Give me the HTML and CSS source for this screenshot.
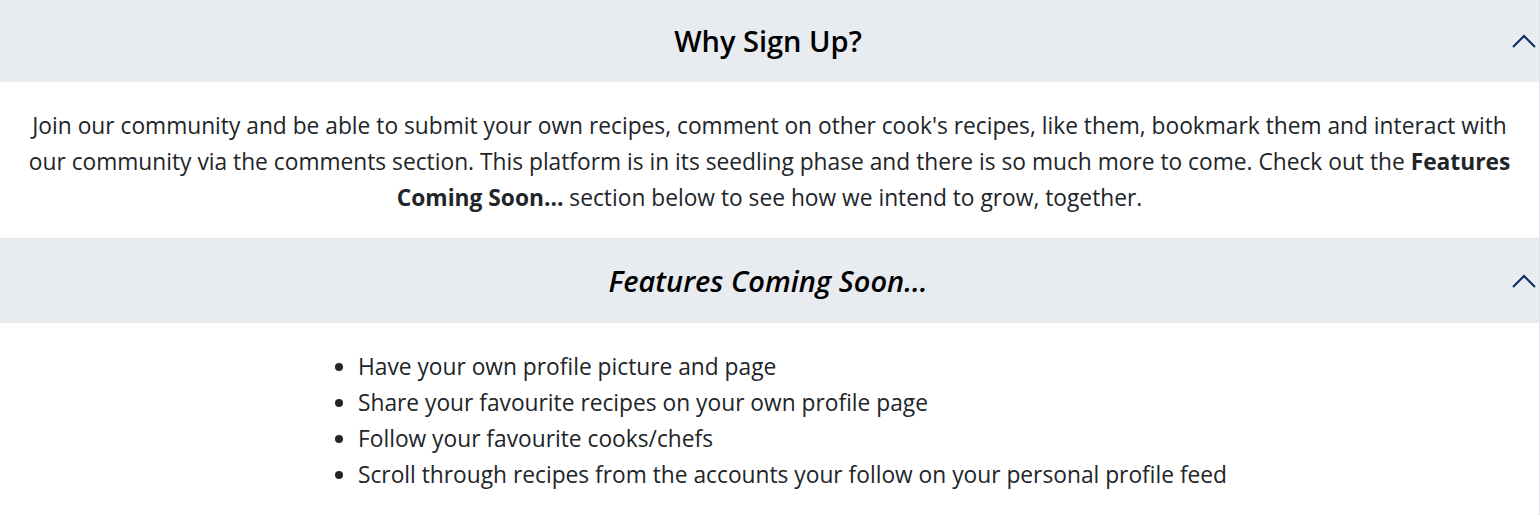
FILE: index.html
```html
<!DOCTYPE html>
<html lang="en">
<head>
<meta charset="utf-8">
<title>Why Sign Up?</title>
<link rel="stylesheet" href="styles.css">
</head>
<body>
<div class="accordion">
  <section class="acc-item">
    <div class="acc-header first">
      <span class="spacer"></span>
      <h3 class="acc-title">Why Sign Up?</h3>
      <svg class="chevron" width="24" height="14" viewBox="0 0 24 14" aria-hidden="true"><polyline points="1,13 12,2 23,13" fill="none" stroke="#052c65" stroke-width="2"/></svg>
    </div>
    <div class="acc-body intro">
      <p class="lead">Join our community and be able to submit your own recipes, comment on other cook's recipes, like them, bookmark them and interact with our community via the comments section. This platform is in its seedling phase and there is so much more to come. Check out the <strong>Features </strong><strong>Coming Soon...</strong> section below to see how we intend to grow, together.</p>
    </div>
  </section>
  <section class="acc-item bordered">
    <div class="acc-header second">
      <span class="spacer"></span>
      <h3 class="acc-title"><em>Features Coming Soon...</em></h3>
      <svg class="chevron" width="24" height="14" viewBox="0 0 24 14" aria-hidden="true"><polyline points="1,13 12,2 23,13" fill="none" stroke="#052c65" stroke-width="2"/></svg>
    </div>
    <div class="acc-body features">
      <ul class="feature-list">
        <li>Have your own profile picture and page</li>
        <li>Share your favourite recipes on your own profile page</li>
        <li>Follow your favourite cooks/chefs</li>
        <li>Scroll through recipes from the accounts your follow on your personal profile feed</li>
      </ul>
    </div>
  </section>
</div>
</body>
</html>
```
FILE: styles.css
```css
html, body {
  margin: 0;
  padding: 0;
  background: #fff;
}
body {
  font-family: "Open Sans", "Noto Sans", sans-serif;
  color: #212529;
}
.accordion {
  border-right: 1px solid #dee2e6;
}
.acc-item.bordered {
  border-top: 1px solid #dee2e6;
}
.acc-header {
  display: grid;
  grid-template-columns: 1fr auto 1fr;
  align-items: center;
  background: #e8ebef;
  padding-right: 3px;
}
.acc-header.first { height: 82px; }
.acc-header.second { height: 84px; }
.acc-title {
  margin: 0;
  font-size: 29px;
  font-weight: 600;
  color: #000;
  line-height: 1.2;
  text-align: center;
}
.acc-title em {
  font-style: italic;
}
.chevron {
  justify-self: end;
  display: block;
}
.acc-body {
  padding: 26px 20px 22px;
  text-align: center;
  font-size: 22.75px;
  line-height: 36px;
}
.lead {
  margin: 0;
}
.lead strong {
  font-weight: 700;
}
.feature-list {
  display: inline-block;
  text-align: left;
  margin: 0;
  padding-left: 46px;
}
.feature-list li {
  line-height: 36px;
}
```
